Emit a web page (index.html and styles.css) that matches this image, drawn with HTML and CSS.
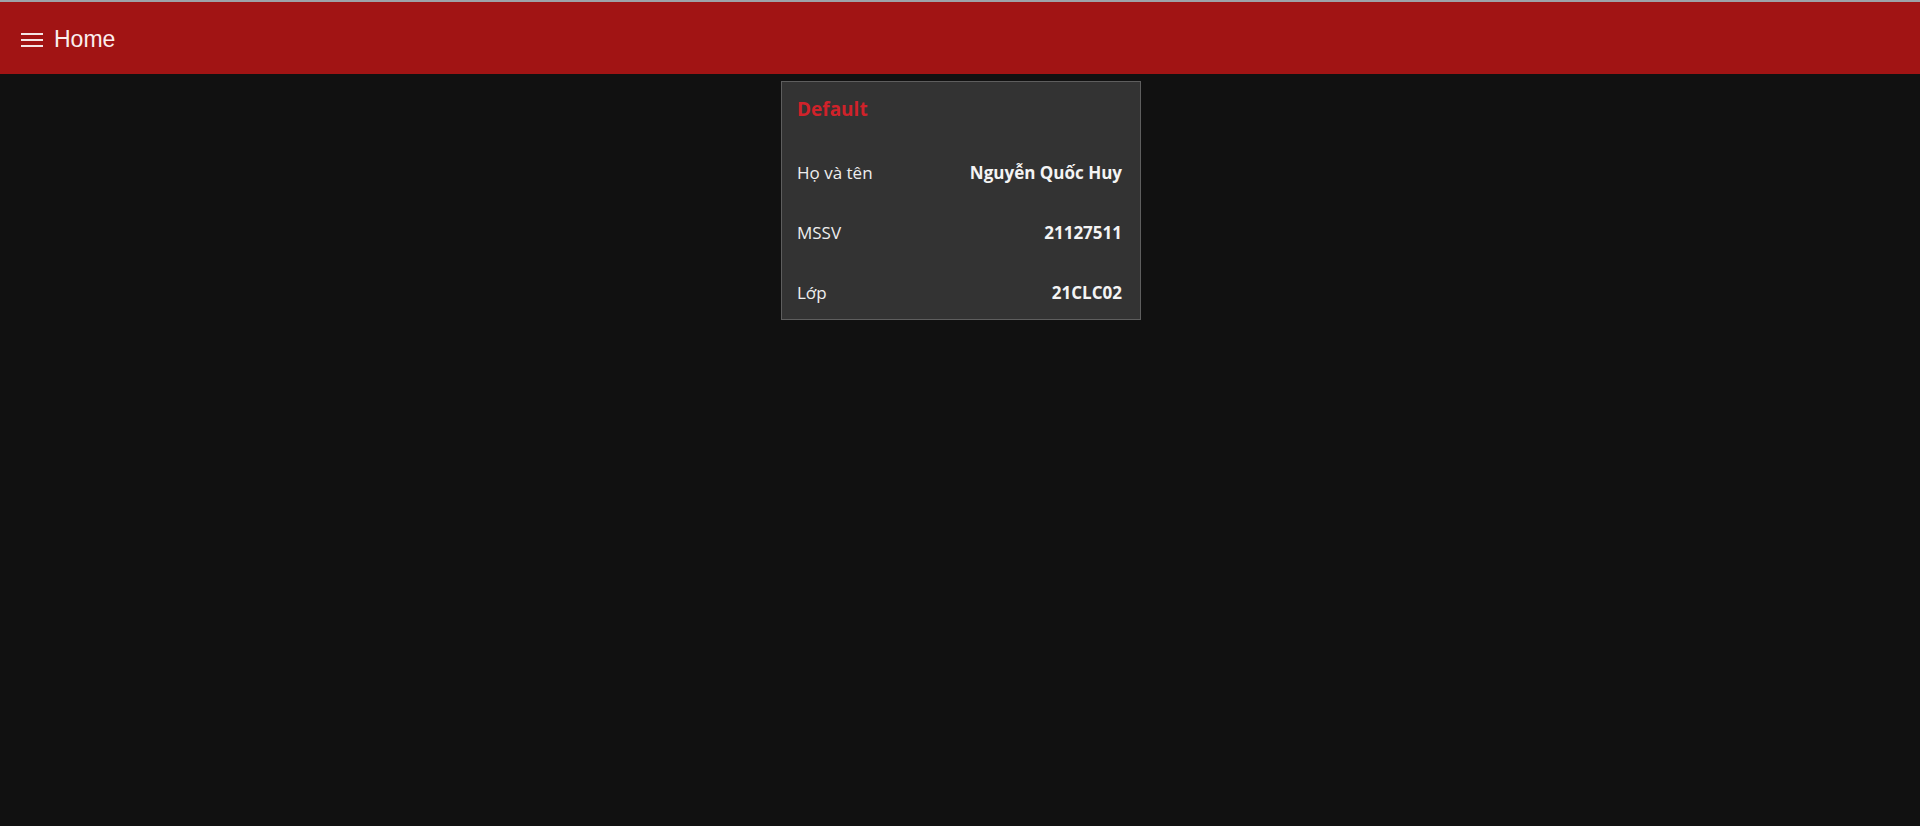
FILE: index.html
```html
<!DOCTYPE html>
<html lang="vi">
<head>
<meta charset="utf-8">
<title>Home</title>
<link rel="stylesheet" href="styles.css">
</head>
<body>
<div class="topline"></div>
<header class="appbar">
  <svg class="menu-icon" width="22" height="14" viewBox="0 0 22 14" aria-hidden="true">
    <rect x="0" y="0" width="22" height="2" fill="#f4e6e6"/>
    <rect x="0" y="6" width="22" height="2" fill="#f4e6e6"/>
    <rect x="0" y="12" width="22" height="2" fill="#f4e6e6"/>
  </svg>
  <span class="appbar-title">Home</span>
</header>
<main class="content">
  <section class="card">
    <h2 class="card-title">Default</h2>
    <div class="row"><span class="label">Họ và tên</span><span class="value">Nguyễn Quốc Huy</span></div>
    <div class="row"><span class="label">MSSV</span><span class="value">21127511</span></div>
    <div class="row"><span class="label">Lớp</span><span class="value">21CLC02</span></div>
  </section>
</main>
</body>
</html>
```
FILE: styles.css
```css
* { box-sizing: border-box; }
html, body { margin: 0; padding: 0; }
body {
  background: #111111;
  height: 826px;
  overflow: hidden;
  font-family: "Open Sans", "Noto Sans", sans-serif;
  color: #f2f2f2;
}
.topline { height: 2px; background: #9ea3a8; }
.appbar {
  height: 72px;
  background: #a11414;
  display: flex;
  align-items: center;
  padding-left: 21px;
  padding-top: 3px;
  gap: 11px;
}
.menu-icon { display: block; margin-top: 1px; }
.appbar-title {
  font-family: "Liberation Sans", Arial, sans-serif;
  font-size: 23px;
  color: #fbeeee;
}
.content {
  display: flex;
  justify-content: center;
  padding-top: 7px;
  padding-left: 2px;
}
.card {
  width: 360px;
  background: #333333;
  border: 1px solid #5e5e5e;
  padding: 0 18px 0 15px;
  display: flex;
  flex-direction: column;
  gap: 6px;
}
.card-title {
  margin: 0;
  height: 57px;
  padding-top: 12px;
  font-size: 19px;
  line-height: 30px;
  font-weight: 700;
  color: #d0222a;
}
.row {
  height: 54px;
  display: flex;
  align-items: center;
  justify-content: space-between;
  font-size: 17px;
}
.label { color: #eeeeee; }
.value { font-weight: 700; color: #f4f4f4; }
```
